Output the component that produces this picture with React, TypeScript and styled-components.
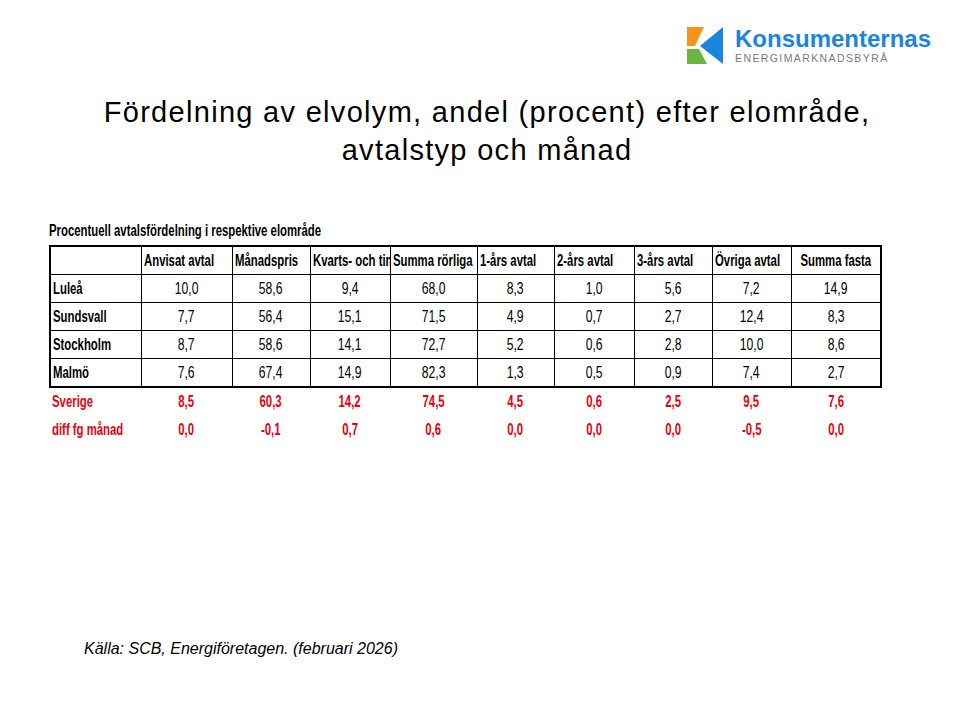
import React from 'react';
import styled, { createGlobalStyle } from 'styled-components';

const GlobalStyle = createGlobalStyle`
  html, body {
    margin: 0;
    padding: 0;
    background: #fff;
  }
  body {
    font-family: "Liberation Sans", Arial, sans-serif;
    color: #000;
  }
`;

const Slide = styled.div`
  width: 960px;
  height: 720px;
  display: flex;
  flex-direction: column;
  overflow: hidden;
  background: #fff;
`;

const Header = styled.div`
  display: flex;
  padding: 27px 0 0 687px;
`;

const Logo = styled.div`
  display: flex;
  align-items: flex-start;
  gap: 11px;
`;

const Wordmark = styled.div`
  display: flex;
  flex-direction: column;
`;

const BrandName = styled.div`
  font-weight: 700;
  font-size: 24px;
  line-height: 24px;
  color: #1b84e0;
  white-space: nowrap;
`;

const BrandSub = styled.div`
  font-size: 10.5px;
  line-height: 12px;
  color: #7a7a7a;
  letter-spacing: 1.4px;
  white-space: nowrap;
  margin-top: 1px;
`;

const Title = styled.h1`
  margin: 29px 0 0 0;
  font-weight: 400;
  font-size: 29px;
  line-height: 38px;
  letter-spacing: 1.3px;
  text-align: center;
  padding-left: 14px;
`;

const TableBlock = styled.div`
  margin: 53px 0 0 49px;
`;

// the sheet font is a narrow one: squeeze the text sideways
const Txt = styled.span<{ $bold?: boolean; $origin?: string }>`
  display: inline-block;
  flex-shrink: 0;
  white-space: nowrap;
  font-weight: ${(p) => (p.$bold ? 700 : 400)};
  transform: scaleX(${(p) => (p.$bold ? 0.71 : 0.76)});
  transform-origin: ${(p) => p.$origin || 'center'};
`;

const Caption = styled.div`
  font-size: 16px;
  line-height: 18px;
  margin-bottom: 5px;
  white-space: nowrap;
`;

const Grid = styled.table`
  border-collapse: collapse;
  table-layout: fixed;
  width: 831px;
  font-size: 16px;
`;

const Box = styled.div<{ $center?: boolean }>`
  display: flex;
  align-items: center;
  justify-content: ${(p) => (p.$center ? 'center' : 'flex-start')};
  overflow: hidden;
  height: 100%;
`;

const HeadCell = styled.th`
  height: 27px;
  padding: 0 0 0 2px;
  border: 1px solid #000;
  border-top: 2px solid #000;
  font-weight: 400;
  vertical-align: middle;

  &:first-child {
    border-left: 2px solid #000;
  }
  &:last-child {
    border-right: 2px solid #000;
    padding: 0;
  }
`;

const Label = styled.td<{ $last?: boolean }>`
  height: 27px;
  padding: 0 0 0 2px;
  border: 1px solid #000;
  border-left: 2px solid #000;
  border-bottom-width: ${(p) => (p.$last ? '2px' : '1px')};
  white-space: nowrap;
`;

const Value = styled.td<{ $last?: boolean; $edge?: boolean }>`
  height: 27px;
  padding: 0;
  border: 1px solid #000;
  border-bottom-width: ${(p) => (p.$last ? '2px' : '1px')};
  border-right-width: ${(p) => (p.$edge ? '2px' : '1px')};
  text-align: center;
`;

const RedLabel = styled.td`
  height: 28px;
  padding: 0 0 0 2px;
  border: none;
  color: #e8000b;
  white-space: nowrap;
`;

const RedValue = styled.td`
  height: 28px;
  padding: 0;
  border: none;
  color: #e8000b;
  text-align: center;
`;

const Source = styled.div`
  margin-top: auto;
  margin-left: 84px;
  padding-bottom: 62px;
  font-style: italic;
  font-size: 16px;
  line-height: 18px;
`;

const widths = [91, 91, 78, 80, 87, 77, 80, 78, 79, 90];

const headers = [
  'Anvisat avtal',
  'Månadspris',
  'Kvarts- och timpris',
  'Summa rörliga',
  '1-års avtal',
  '2-års avtal',
  '3-års avtal',
  'Övriga avtal',
  'Summa fasta',
];

const rows: [string, string[]][] = [
  ['Luleå', ['10,0', '58,6', '9,4', '68,0', '8,3', '1,0', '5,6', '7,2', '14,9']],
  ['Sundsvall', ['7,7', '56,4', '15,1', '71,5', '4,9', '0,7', '2,7', '12,4', '8,3']],
  ['Stockholm', ['8,7', '58,6', '14,1', '72,7', '5,2', '0,6', '2,8', '10,0', '8,6']],
  ['Malmö', ['7,6', '67,4', '14,9', '82,3', '1,3', '0,5', '0,9', '7,4', '2,7']],
];

const totals: [string, string[]][] = [
  ['Sverige', ['8,5', '60,3', '14,2', '74,5', '4,5', '0,6', '2,5', '9,5', '7,6']],
  ['diff fg månad', ['0,0', '-0,1', '0,7', '0,6', '0,0', '0,0', '0,0', '-0,5', '0,0']],
];

const LogoMark = () => (
  <svg width="37" height="37" viewBox="0 0 37 37">
    <polygon points="0,0 17,0 8,19 0,19" fill="#f7941d" />
    <polygon points="0,22 12,22 20,37 0,37" fill="#6cb33f" />
    <polygon points="36,0 36,37 13,19" fill="#1b84e0" />
  </svg>
);

const App = () => (
  <Slide>
    <GlobalStyle />
    <Header>
      <Logo>
        <LogoMark />
        <Wordmark>
          <BrandName>Konsumenternas</BrandName>
          <BrandSub>ENERGIMARKNADSBYRÅ</BrandSub>
        </Wordmark>
      </Logo>
    </Header>
    <Title>
      Fördelning av elvolym, andel (procent) efter elområde,
      <br />
      avtalstyp och månad
    </Title>
    <TableBlock>
      <Caption>
        <Txt $bold $origin="left">
          Procentuell avtalsfördelning i respektive elområde
        </Txt>
      </Caption>
      <Grid>
        <colgroup>
          {widths.map((w, i) => (
            <col key={i} style={{ width: w }} />
          ))}
        </colgroup>
        <tbody>
          <tr>
            <HeadCell />
            {headers.map((h, i) => {
              const last = i === headers.length - 1;
              return (
                <HeadCell key={h}>
                  <Box $center={last}>
                    <Txt $bold $origin={last ? 'center' : 'left'}>
                      {h}
                    </Txt>
                  </Box>
                </HeadCell>
              );
            })}
          </tr>
          {rows.map(([name, vals], r) => (
            <tr key={name}>
              <Label $last={r === rows.length - 1}>
                <Txt $bold $origin="left">
                  {name}
                </Txt>
              </Label>
              {vals.map((v, i) => (
                <Value key={i} $last={r === rows.length - 1} $edge={i === vals.length - 1}>
                  <Txt>{v}</Txt>
                </Value>
              ))}
            </tr>
          ))}
          {totals.map(([name, vals]) => (
            <tr key={name}>
              <RedLabel>
                <Txt $bold $origin="left">
                  {name}
                </Txt>
              </RedLabel>
              {vals.map((v, i) => (
                <RedValue key={i}>
                  <Txt $bold>{v}</Txt>
                </RedValue>
              ))}
            </tr>
          ))}
        </tbody>
      </Grid>
    </TableBlock>
    <Source>Källa: SCB, Energiföretagen. (februari 2026)</Source>
  </Slide>
);

export default App;
